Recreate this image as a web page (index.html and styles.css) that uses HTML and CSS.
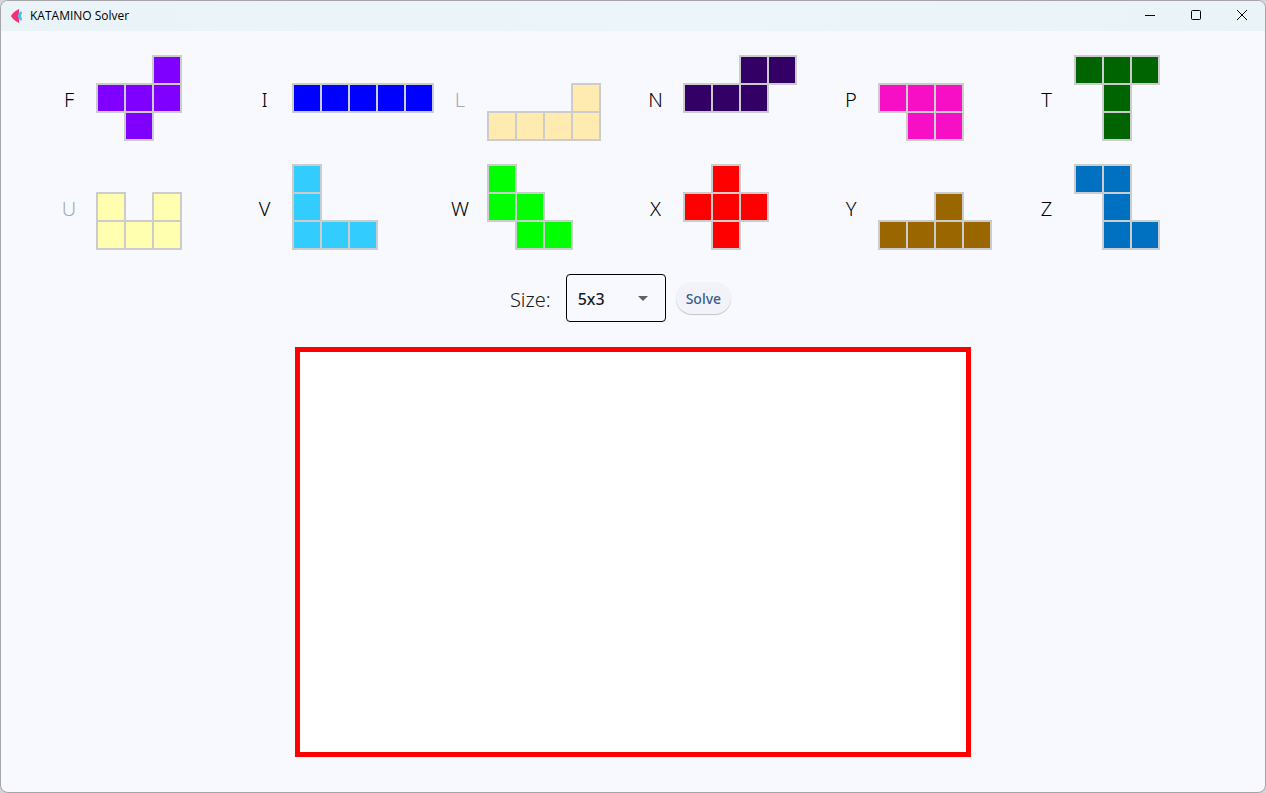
FILE: index.html
```html
<!DOCTYPE html>
<html lang="en">
<head>
<meta charset="utf-8">
<meta name="viewport" content="width=device-width, initial-scale=1">
<title>KATAMINO Solver</title>
<link rel="stylesheet" href="styles.css">
</head>
<body>
<div class="window">
  <header class="titlebar">
    <svg class="logo" viewBox="0 0 12 14" aria-hidden="true">
      <path d="M5 7 9 3Q11 1.500 11 4L10 7 11 10Q11 12.500 9 11Z" fill="#54b8ee"/>
      <path d="M0 7Q2 3 8 0V4L6.500 7 8 10V14Q2 11 0 7Z" fill="#f5316f"/>
    </svg>
    <h1 class="title">KATAMINO Solver</h1>
    <div class="window-controls">
      <button class="window-button" type="button" aria-label="Minimize"><svg viewBox="0 0 12 12"><path d="M1 6.500H11"/></svg></button>
      <button class="window-button" type="button" aria-label="Maximize"><svg viewBox="0 0 12 12"><rect x="1.500" y="1.500" width="9" height="9" rx="1"/></svg></button>
      <button class="window-button" type="button" aria-label="Close"><svg viewBox="0 0 12 12"><path d="M1 1 11 11M11 1 1 11"/></svg></button>
    </div>
  </header>
  <main class="content">
    <div class="pieces" id="pieces"></div>
    <form class="toolbar">
      <label class="size-label" for="size">Size:</label>
      <div class="select-box">
        <select class="size-select" id="size"><option>5x3</option></select>
        <svg class="arrow" viewBox="0 0 10 5" aria-hidden="true"><path d="M0 0H10L5 5Z"/></svg>
      </div>
      <button class="solve" type="button">Solve</button>
    </form>
    <section class="board" aria-label="Solution board"></section>
  </main>
</div>
<script src="script.js"></script>
</body>
</html>
```

FILE: styles.css
```css
* { box-sizing: border-box; }

body {
  margin: 0;
  background: #d4d4d8;
  color: #191c20;
  font-family: "Noto Sans", "Open Sans", sans-serif;
}

.window {
  display: flex;
  flex-direction: column;
  min-height: 100vh;
  border: 1px solid #a5a5a9;
  border-radius: 8px;
  background: #f8f9ff;
  overflow: hidden;
}

.titlebar {
  display: flex;
  align-items: center;
  height: 30px;
  padding-left: 10px;
  background: linear-gradient(90deg, #eaf4f8, #ecf5f9 55%, #eaf4f8);
}

.logo { width: 12px; height: 14px; }

.title {
  margin: 0 auto 0 7px;
  color: #000;
  font-family: "Open Sans", "Noto Sans", sans-serif;
  font-size: 12px;
  font-weight: 400;
  line-height: 16px;
}

.window-controls { display: flex; }

.window-button {
  display: grid;
  place-items: center;
  width: 46px;
  height: 30px;
  padding: 0 0 2px;
  border: 0;
  background: none;
}

.window-button svg {
  width: 12px;
  height: 12px;
  fill: none;
  stroke: #000;
  stroke-width: 1;
}

.content {
  display: flex;
  flex: 1;
  flex-direction: column;
  align-items: center;
  padding: 24px 45px 35px;
}

.pieces {
  display: grid;
  grid-template-columns: repeat(6, 1fr);
  row-gap: 23px;
  width: 100%;
  padding-right: 1px;
}

.piece {
  display: flex;
  align-items: center;
  gap: 4px;
  padding: 0;
  border: 0;
  background: none;
  color: #000;
  font: inherit;
  font-size: 20px;
  font-weight: 350;
  line-height: 28px;
}

.piece.off { color: #a9a9ac; }

.letter {
  width: 46px;
  padding-top: 4px;
  text-align: center;
}

.shape {
  width: 142px;
  height: 86px;
  stroke: #ccc;
  stroke-width: 2;
  shape-rendering: crispEdges;
}

.toolbar {
  display: flex;
  align-items: center;
  margin: 24px 25px 25px 0;
}

.size-label {
  margin-right: 15px;
  padding-top: 4px;
  font-size: 20px;
  font-weight: 350;
  line-height: 28px;
}

.select-box {
  position: relative;
  width: 100px;
  margin-right: 10px;
}

.size-select {
  display: block;
  width: 100%;
  height: 48px;
  padding: 2px 11px 0;
  border: 1px solid #000;
  border-radius: 4px;
  appearance: none;
  background: transparent;
  color: #191c20;
  font: inherit;
  font-size: 16px;
  font-weight: 500;
}

.arrow {
  position: absolute;
  top: 22px;
  right: 18px;
  width: 10px;
  height: 5px;
  fill: #616161;
  pointer-events: none;
}

.solve {
  height: 32px;
  padding: 0 10px;
  border: 0;
  border-radius: 16px;
  background: #f2f3fa;
  box-shadow: 0 1px 1px #00000038;
  color: #36618e;
  font: inherit;
  font-size: 14px;
  font-weight: 500;
}

.board {
  width: 100%;
  max-width: 676px;
  aspect-ratio: 676 / 410;
  border: 5px solid #f00;
  background: #fff;
}
```

FILE: script.js
```
const pieces = [
  ["F", "#7f00ff", ["..#", "###", ".#."]],
  ["I", "#0000ff", ["", "#####", ""]],
  ["L", "#ffebaf", ["", "...#", "####"], true],
  ["N", "#330066", ["..##", "###", ""]],
  ["P", "#f60fc4", ["", "###", ".##"]],
  ["T", "#006400", ["###", ".#.", ".#."]],
  ["U", "#ffffaf", ["", "#.#", "###"], true],
  ["V", "#33ccff", ["#", "#", "###"]],
  ["W", "#00ff00", ["#", "##", ".##"]],
  ["X", "#ff0000", [".#.", "###", ".#."]],
  ["Y", "#996600", ["", "..#.", "####"]],
  ["Z", "#0070c0", ["##", ".#.", ".##"]]
];

document.getElementById("pieces").innerHTML = pieces.map(([name, color, rows, off]) => {
  const cells = rows.flatMap((row, y) => [...row].map((mark, x) =>
    mark === "#" ? `<rect x="${1 + x * 28}" y="${1 + y * 28}" width="28" height="28"/>` : ""
  )).join("");
  return `<button type="button" class="piece${off ? " off" : ""}" aria-pressed="${!off}">
    <span class="letter">${name}</span>
    <svg class="shape" viewBox="0 0 142 86" fill="${color}" aria-hidden="true">${cells}</svg>
  </button>`;
}).join("");
```
